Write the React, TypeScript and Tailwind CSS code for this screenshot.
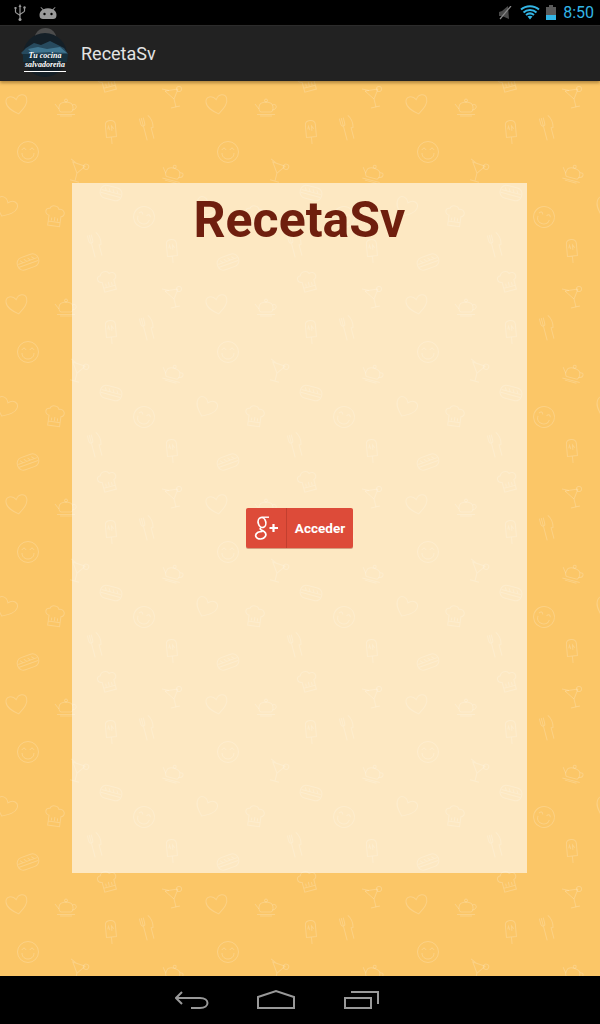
import React from "react";

const Heart = () => <path d="M0 10 C-6 6 -11 2 -10.5 -4 C-10 -9 -3.5 -10 0 -4.5 C3 -10 10 -9.5 10.5 -4 C11 2 5 6 0 10Z" />;
const Teapot = () => (
  <g>
    <path d="M-6 -3 C-3 -5.5 3 -5.5 6 -3 C7.5 0 7.5 3 5.5 5 L-5.5 5 C-7.5 3 -7.5 0 -6 -3Z" />
    <circle cx="0" cy="-6.5" r="1.5" />
    <path d="M-7 2 L-11 -3 M6.5 -2 C11 -4 12 2 6.5 3 M-9 7.5 L9 7.5 M-6 9 L6 9" />
  </g>
);
const Cocktail = () => (
  <g>
    <path d="M-8 -6 L5 -8 L1 2Z M-4 -6.5 L-11 -8 M1 2 L3 10 M-2 11 L7 9" />
    <circle cx="6" cy="-8" r="2.7" />
  </g>
);
const Popsicle = () => (
  <g>
    <path d="M-5 -7 C-5 -13 5 -13 5 -7 L5 5 L-5 5Z M0 5 L0 12 M-3 -3 L-2 -6 L-1 -2 M1 -1 L1 -6 L3 -3" />
  </g>
);
const Fork = () => (
  <g>
    <path d="M-5 -11 L-5 -5 C-5 -2 -1 -2 -1 -5 L-1 -11 M-3 -11 L-3 -3 L-3 12" />
    <path d="M4 -12 C7 -8 7 -3 6 1 L4 1 L4 12" />
  </g>
);
const Smiley = () => (
  <g>
    <circle r="10.5" />
    <path d="M-6 1 C-6 9 6 9 6 1 M-6 -2 C-5 -4.5 -3 -4.5 -2 -2 M2 -2 C3 -4.5 5 -4.5 6 -2" />
  </g>
);
const Hotdog = () => (
  <g>
    <rect x="-11" y="-6.5" width="22" height="13" rx="6" />
    <path d="M-10 -1 L10 -1 M-10 2 L10 2 M-7 -4 L-5 -1 M-3 -4 L-1 -1 M1 -4 L3 -1 M5 -4 L7 -1" />
  </g>
);
const Hat = () => (
  <g>
    <path d="M-6 0 C-11 -1 -11 -7 -6 -7 C-5 -11 2 -11 3 -7 C9 -9 11 -1 6 0 L6 10 L-6 10Z M-6 6 L6 6 M-3 5 L-3 2 M0 5 L0 1 M3 5 L3 2" />
  </g>
);

const items: [React.FC, number, number, number][] = [
  [Heart, 17, 23, -10],
  [Teapot, 66, 26, 0],
  [Cocktail, 173, 16, 0],
  [Popsicle, 111, 51, -5],
  [Fork, 147, 47, -15],
  [Smiley, 28, 71, 0],
  [Cocktail, 77, 90, 28],
  [Teapot, 173, 92, 15],
  [Hotdog, 111, 112, 15],
  [Heart, 6, 126, 25],
  [Hat, 55, 135, 8],
  [Smiley, 144, 136, 20],
  [Fork, 95, 164, -15],
  [Popsicle, 172, 170, -5],
  [Hotdog, 28, 181, -20],
  [Hat, 108, 200, -15],
];

const tiles: [number, number][] = [];
for (let i = -1; i < 4; i++) for (let j = -1; j < 5; j++) tiles.push([i * 200, j * 200]);

function Pattern() {
  return (
    <svg className="absolute inset-0 w-full h-full" width="600" height="895" fill="none" stroke="#ffffff" strokeOpacity="0.2" strokeWidth="1">
      <defs>
        <g id="tile">
          {items.map(([Icon, x, y, r], k) => (
            <g key={k} transform={`translate(${x} ${y}) rotate(${r})`}>
              <Icon />
            </g>
          ))}
        </g>
      </defs>
      {tiles.map(([x, y], k) => (
        <use key={k} href="#tile" x={x} y={y} />
      ))}
    </svg>
  );
}

function StatusBar() {
  return (
    <div className="h-[25px] bg-black flex items-center pl-[14px] shrink-0">
      <svg width="12" height="18" viewBox="0 0 12 18" fill="none" stroke="#999" strokeWidth="1.2">
        <path d="M6 2 L6 15 M1.5 5 L1.5 8 C1.5 9.5 6 10 6 12 M10.5 4 L10.5 7 C10.5 8.5 6 9 6 11" />
        <path d="M6 0 L7.5 3 L4.5 3Z" fill="#999" stroke="none" />
        <circle cx="6" cy="15.5" r="1.5" fill="#999" stroke="none" />
        <rect x="0.5" y="3" width="2" height="2" fill="#999" stroke="none" />
        <circle cx="10.5" cy="3.5" r="1.2" fill="#999" stroke="none" />
      </svg>
      <svg className="ml-[13px]" width="18" height="14" viewBox="0 0 18 14" fill="#999">
        <path d="M2 1 L4.5 3.2 C7 1.8 11 1.8 13.5 3.2 L16 1 L16.5 1.5 L14.5 3.8 C16.5 5 17.5 7 17.5 9 C17.5 12 16 13 14 13 L4 13 C2 13 0.5 12 0.5 9 C0.5 7 1.5 5 3.5 3.8 L1.5 1.5Z" />
        <circle cx="5.5" cy="8" r="1.2" fill="#000" />
        <circle cx="12.5" cy="8" r="1.2" fill="#000" />
      </svg>
      <div className="flex-1" />
      <svg className="mr-[8px]" width="13" height="14" viewBox="0 0 13 14" fill="#4a4a4a">
        <path d="M0 6 L3 5 L9 0 L10 13 L3 10 L0 10Z" />
        <path d="M1 13 L12 0" stroke="#8a8a8a" strokeWidth="1.2" />
      </svg>
      <svg width="20" height="15" viewBox="0 0 20 15" fill="none" stroke="#33b5e5" strokeWidth="2">
        <path d="M1 4.5 C6 0 14 0 19 4.5 M3.5 7.5 C7 4 13 4 16.5 7.5 M6 10 C8.5 8 11.5 8 14 10" />
        <path d="M7.5 11.5 C9 10.5 11 10.5 12.5 11.5 L10 14.5Z" fill="#33b5e5" stroke="none" />
      </svg>
      <div className="ml-[6px] w-[10px] h-[15px] flex flex-col items-center">
        <div className="w-[4px] h-[2px] bg-[#5a5a5a]" />
        <div className="w-full flex-1 bg-[#5a5a5a]" />
        <div className="w-full h-[5px] bg-[#33b5e5]" />
      </div>
      <span className="ml-[7px] text-[#33b5e5] text-[16px] leading-none font-['Roboto',sans-serif]">8:50</span>
      <div className="w-[6px]" />
    </div>
  );
}

function Logo() {
  return (
    <div className="relative w-[50px] h-[52px]">
      <svg width="50" height="52" viewBox="0 0 50 52">
        <circle cx="25.5" cy="11" r="11" fill="#4c4c4c" />
        <rect x="17" y="7" width="17" height="3" fill="#2e2e2e" />
        <circle cx="25" cy="27" r="22" fill="#141f27" />
        <path d="M6 20 L14 15 L21 17 L30 13 L44 20 L48 26 L44 29 L6 29 L1 25Z" fill="#274a5e" />
        <path d="M8 21 L18 19 L27 21 L40 19 L47 25 L30 24 L12 25Z" fill="#3f7590" />
        <path d="M3 26 L48 26 L47 34 L3 34Z" fill="#16303d" />
      </svg>
      <div className="absolute inset-x-0 top-[23px] flex flex-col items-center font-['Liberation_Serif',serif] italic font-bold text-white text-[8px] leading-[9px] whitespace-nowrap">
        <span>Tu cocina</span>
        <span>salvadoreña</span>
        <div className="w-[42px] h-px bg-white mt-[2px]" />
      </div>
    </div>
  );
}

function ActionBar() {
  return (
    <div className="relative z-10 h-[56px] bg-[#222222] border-t border-[#2c2c2c] flex items-center pl-[20px] shrink-0 shadow-[0_2px_3px_rgba(90,60,10,0.45)]">
      <Logo />
      <span className="ml-[11px] text-[#e4e4e4] text-[18px] font-['Roboto',sans-serif]">RecetaSv</span>
    </div>
  );
}

function GooglePlus() {
  return (
    <svg width="26" height="24" viewBox="0 0 26 24" fill="none" stroke="#ffffff" strokeWidth="1.7">
      <ellipse cx="8" cy="6.5" rx="3.8" ry="5" transform="rotate(-15 8 6.5)" />
      <path d="M7.5 1.2 L15 1.2" strokeWidth="1.4" />
      <path d="M7 11.8 C4.5 13.5 8.5 14.2 10.5 15.8 C13.5 18.5 11 23 6.5 23 C1.5 23 0 18.5 4 16.2 C5.5 15.5 7.5 15.5 8.5 15.5" />
      <path d="M19.5 8 L19.5 16 M15.5 12 L24 12" strokeWidth="2.2" />
    </svg>
  );
}

function GoogleButton() {
  return (
    <button className="mt-[250px] w-[107px] h-[40px] bg-[#dd4b39] rounded-[2px] flex items-stretch text-white shadow-[0_1px_0_rgba(150,50,30,0.4)]">
      <span className="w-[41px] flex items-center justify-center border-r border-[#c23f2f] pl-[1px]">
        <GooglePlus />
      </span>
      <span className="flex-1 flex items-center justify-center text-[13.5px] font-bold font-['Roboto',sans-serif]">Acceder</span>
    </button>
  );
}

function NavBar() {
  return (
    <div className="h-[48px] bg-black flex items-center justify-center shrink-0 pr-[46px] gap-[46px]">
      <svg width="36" height="22" viewBox="0 0 36 22" fill="none" stroke="#999" strokeWidth="2">
        <path d="M7 3 L1 9 L7 15 M1 9 L25 9 C35 9 35 19 25 19 L16 19" />
      </svg>
      <svg width="38" height="22" viewBox="0 0 38 22" fill="none" stroke="#999" strokeWidth="2">
        <path d="M1 8 L19 2 L37 8 L37 19 L1 19Z" />
      </svg>
      <svg width="38" height="22" viewBox="0 0 38 22" fill="none" stroke="#999" strokeWidth="2">
        <path d="M4 9 L30 9 L30 19 L4 19Z" />
        <path d="M10 3 L37 3 L37 15" />
      </svg>
    </div>
  );
}

export default function App() {
  return (
    <div className="w-[600px] h-[1024px] flex flex-col overflow-hidden font-['Roboto',sans-serif]">
      <StatusBar />
      <ActionBar />
      <main className="relative flex-1 bg-[#fbc667] overflow-hidden pl-[72px] pt-[102px]">
        <Pattern />
        <div className="relative w-[455px] h-[690px] bg-white/60 flex flex-col items-center">
          <h1 className="h-[75px] text-[50px] leading-[75px] font-bold text-[#6f1f0e] font-['Roboto',sans-serif]">RecetaSv</h1>
          <GoogleButton />
        </div>
      </main>
      <NavBar />
    </div>
  );
}
